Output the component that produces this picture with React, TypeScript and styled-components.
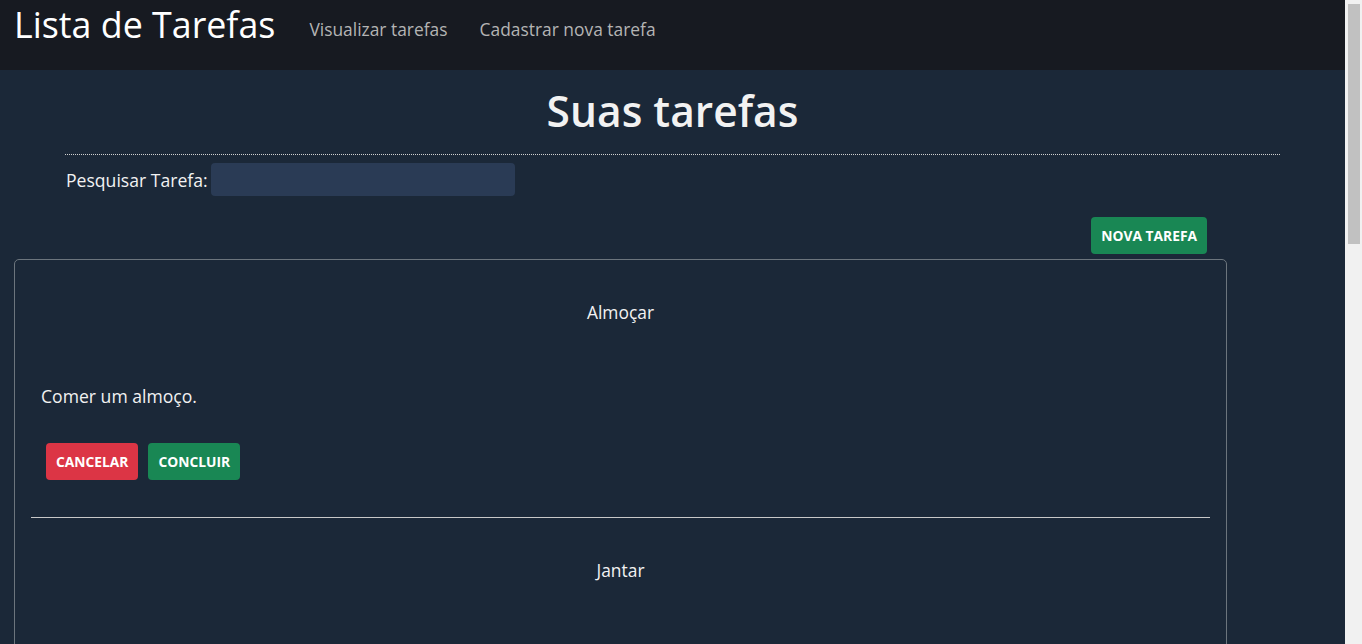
import React, {useState} from 'react';
import styled, {createGlobalStyle} from "styled-components";

type TaskType = {
    id: number
    title: string
    description: string
}

const tasks: TaskType[] = [
    {id: 1, title: 'Almoçar', description: 'Comer um almoço.'},
    {id: 2, title: 'Jantar', description: 'Comer um jantar.'},
]

function App() {
    const [search, setSearch] = useState('')
    const filtered = tasks.filter(t => t.title.toLowerCase().includes(search.toLowerCase()))

    return (
        <div>
            <GlobalStyle/>
            <NavBar>
                <Brand>Lista de Tarefas</Brand>
                <NavLink>Visualizar tarefas</NavLink>
                <NavLink>Cadastrar nova tarefa</NavLink>
            </NavBar>
            <Main>
                <Title>Suas tarefas</Title>
                <SearchRow>
                    <SearchLabel>Pesquisar Tarefa:</SearchLabel>
                    <SearchInput value={search} onChange={e => setSearch(e.target.value)}/>
                </SearchRow>
                <Actions>
                    <Button variant="success">Nova Tarefa</Button>
                </Actions>
                <TaskList>
                    {filtered.map((t, i) => (
                        <Task key={t.id} first={i === 0}>
                            <TaskTitle>{t.title}</TaskTitle>
                            <TaskText>{t.description}</TaskText>
                            <TaskButtons>
                                <Button variant="danger">Cancelar</Button>
                                <Button variant="success">Concluir</Button>
                            </TaskButtons>
                        </Task>
                    ))}
                </TaskList>
            </Main>
        </div>
    );
}

export default App;

// the screenshot hides real scrollbars, so the track is painted by hand
const GlobalStyle = createGlobalStyle`
  html {
    background: #f1f1f1;
  }
  body {
    margin: 0;
    width: calc(100% - 17px);
    background: #1b2838;
    color: #f2f2f2;
    font-family: "Open Sans", "DejaVu Sans", sans-serif;
  }
  body::after {
    content: "";
    position: fixed;
    top: 4px;
    right: 2px;
    width: 12px;
    height: 240px;
    background: #c1c1c1;
  }
`

const NavBar = styled.nav`
  display: flex;
  align-items: flex-start;
  height: 70px;
  padding: 0 14px;
  background: #171a21;
`
const Brand = styled.div`
  font-size: 35.8px;
  line-height: 48px;
  color: #ffffff;
  margin-right: 18px;
`
const NavLink = styled.div`
  font-size: 17.4px;
  line-height: 58px;
  color: #b4b4b4;
  padding: 0 16px;
  cursor: pointer;
`
const Main = styled.main`
  padding: 0 14px;
`
const Title = styled.h1`
  margin: 12px 51px 0;
  padding-bottom: 15px;
  text-align: center;
  font-size: 42.5px;
  font-weight: 600;
  border-bottom: 1px dotted #d0d0d0;
`
const SearchRow = styled.div`
  display: flex;
  align-items: center;
  gap: 3px;
  margin: 8px 52px 0;
`
const SearchLabel = styled.label`
  font-size: 17.6px;
`
const SearchInput = styled.input`
  width: 304px;
  height: 33px;
  box-sizing: border-box;
  border: none;
  border-radius: 4px;
  background: #2a3b55;
  color: #fff;
  outline: none;
`
const Actions = styled.div`
  display: flex;
  justify-content: flex-end;
  width: 1193px;
  margin-top: 21px;
  margin-bottom: 5px;
`
const Button = styled.button<{ variant: 'success' | 'danger' }>`
  height: 37px;
  padding: 0 10px;
  border: none;
  border-radius: 4px;
  background: ${p => p.variant === 'success' ? '#198754' : '#dc3545'};
  color: #fff;
  font-family: "Open Sans", "DejaVu Sans", sans-serif;
  font-size: 13.8px;
  font-weight: 700;
  text-transform: uppercase;
  cursor: pointer;
`
const TaskList = styled.div`
  width: 1213px;
  box-sizing: border-box;
  border: 1px solid #6c757d;
  border-radius: 5px;
  padding: 0 16px;
`
const Task = styled.div<{ first: boolean }>`
  padding: 40px 15px 37px;
  border-top: ${p => p.first ? 'none' : '1px solid #c8c8c8'};
`
const TaskTitle = styled.div`
  text-align: center;
  font-size: 17.4px;
`
const TaskText = styled.p`
  margin: 60px 0 0 -5px;
  font-size: 17.6px;
`
const TaskButtons = styled.div`
  display: flex;
  gap: 10px;
  margin-top: 35px;
`
